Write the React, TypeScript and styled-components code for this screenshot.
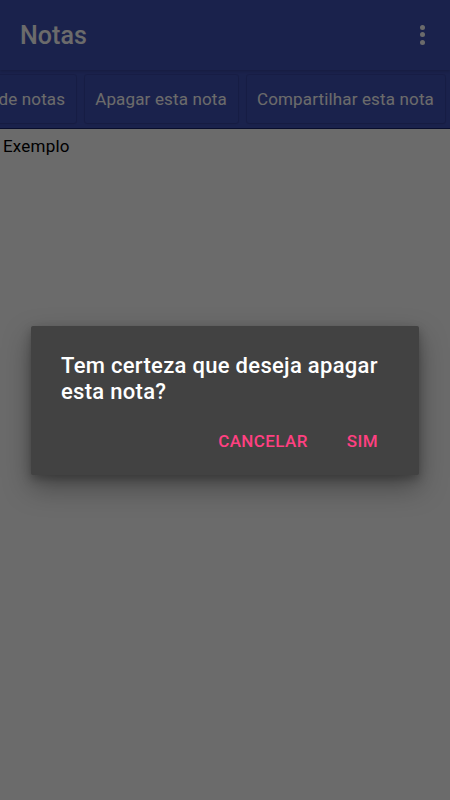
import React from "react";
import styled, { createGlobalStyle } from "styled-components";

const GlobalStyle = createGlobalStyle`
  html, body { margin: 0; padding: 0; }
  body { font-family: Roboto, "Noto Sans", Arial, sans-serif; background: #ffffff; }
  * { box-sizing: border-box; }
`;

const Screen = styled.div`
  position: relative;
  width: 450px;
  height: 800px;
  overflow: hidden;
  background: #ffffff;
  display: flex;
  flex-direction: column;
`;

const AppBar = styled.header`
  height: 70px;
  flex: none;
  background: #3f51b5;
  display: flex;
  align-items: center;
  justify-content: space-between;
  padding: 0 25px 0 20px;
  box-shadow: 0 1px 3px rgba(0, 0, 0, 0.2);
  position: relative;
  z-index: 1;
`;

const Title = styled.h1`
  margin: 0;
  font-size: 25px;
  font-weight: 500;
  color: #ffffff;
  letter-spacing: 0.1px;
`;

const MenuButton = styled.div`
  display: flex;
  flex-direction: column;
  align-items: center;
  gap: 2.5px;
  margin-top: -1px;
`;

const Dot = styled.span`
  width: 5px;
  height: 5px;
  border-radius: 50%;
  background: #ffffff;
`;

const TabBar = styled.nav`
  height: 59px;
  flex: none;
  background: #3f51b5;
  border-bottom: 1px solid #15206a;
  display: flex;
  align-items: center;
  justify-content: flex-end;
  gap: 9px;
  padding-right: 5px;
  overflow: hidden;
`;

const TabButton = styled.button`
  flex: none;
  height: 48px;
  padding: 0 11px 0 10px;
  background: #3f51b5;
  border: none;
  border-radius: 2px;
  box-shadow: 0 0 0 1px rgba(0, 0, 40, 0.1), 0 1px 2px rgba(0, 0, 0, 0.08);
  font-family: Roboto, "Noto Sans", Arial, sans-serif;
  font-size: 17px;
  letter-spacing: 0.15px;
  font-weight: 400;
  color: #ffffff;
  white-space: nowrap;
`;

const Content = styled.main`
  flex: 1;
  padding: 7px 3px;
  font-size: 17px;
  letter-spacing: 0.2px;
  color: #000000;
`;

const Overlay = styled.div`
  position: absolute;
  inset: 0;
  background: rgba(0, 0, 0, 0.58);
  display: flex;
  align-items: center;
  justify-content: center;
  z-index: 5;
`;

const Dialog = styled.div`
  width: 388px;
  background: #424242;
  border-radius: 2px;
  box-shadow: 0 12px 28px rgba(0, 0, 0, 0.35), 0 4px 10px rgba(0, 0, 0, 0.25);
  padding: 27px 0 16px;
`;

const Message = styled.p`
  margin: 0;
  padding: 0 30px;
  font-size: 22px;
  line-height: 26px;
  letter-spacing: 0.3px;
  font-weight: 500;
  color: #ffffff;
`;

const Actions = styled.div`
  display: flex;
  justify-content: flex-end;
  gap: 19px;
  padding-right: 31px;
  margin-top: 18px;
`;

const ActionButton = styled.button`
  height: 36px;
  padding: 0 10px;
  background: transparent;
  border: none;
  font-family: Roboto, "Noto Sans", Arial, sans-serif;
  font-size: 17px;
  letter-spacing: 0.4px;
  font-weight: 500;
  color: #ff4081;
  text-transform: uppercase;
`;

export default function App() {
  return (
    <>
      <GlobalStyle />
      <Screen>
        <AppBar>
          <Title>Notas</Title>
          <MenuButton aria-label="Mais opções">
            <Dot />
            <Dot />
            <Dot />
          </MenuButton>
        </AppBar>
        <TabBar>
          <TabButton>Lista de notas</TabButton>
          <TabButton>Apagar esta nota</TabButton>
          <TabButton>Compartilhar esta nota</TabButton>
        </TabBar>
        <Content>Exemplo</Content>
        <Overlay>
          <Dialog role="dialog">
            <Message>Tem certeza que deseja apagar esta nota?</Message>
            <Actions>
              <ActionButton>Cancelar</ActionButton>
              <ActionButton>Sim</ActionButton>
            </Actions>
          </Dialog>
        </Overlay>
      </Screen>
    </>
  );
}
